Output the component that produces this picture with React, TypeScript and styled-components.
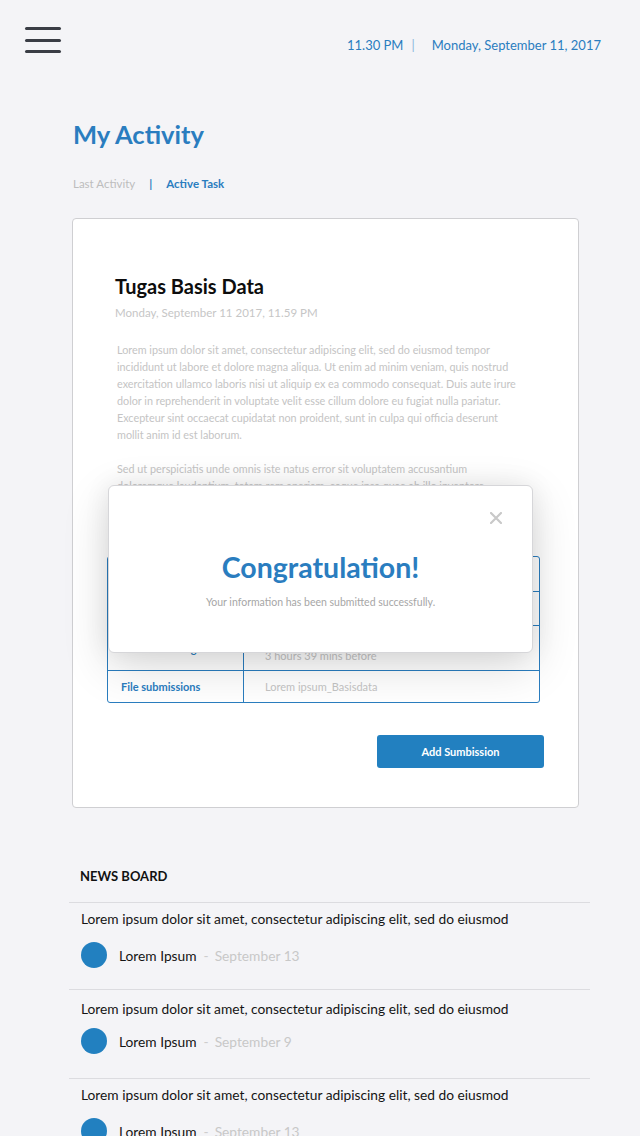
import React from 'react'
import styled, { createGlobalStyle } from 'styled-components'

const blue = '#2a7dbf'

const GlobalStyle = createGlobalStyle`
    html, body {
        margin: 0;
        padding: 0;
        background: #f4f4f7;
        font-family: Lato, "Open Sans", sans-serif;
    }
`

const Page = styled.div`
    width: 640px;
    min-height: 1136px;
    background: #f4f4f7;
    overflow: hidden;
`

const TopBar = styled.header`
    display: flex;
    justify-content: space-between;
    align-items: center;
    padding: 26px 39px 0 25px;
    height: 28px;
`

const Burger = styled.button`
    display: flex;
    flex-direction: column;
    justify-content: space-between;
    width: 36px;
    height: 26px;
    padding: 0;
    border: none;
    background: none;

    span {
        display: block;
        height: 3px;
        border-radius: 2px;
        background: #3a3d45;
    }
`

const Clock = styled.div`
    display: flex;
    color: ${blue};
    font-size: 13px;
    margin-top: 10px;

    i {
        font-style: normal;
        color: #8ab6db;
        margin: 0 17px 0 8px;
    }
`

const Main = styled.main`
    padding: 0 59px 0 72px;
`

const Heading = styled.h1`
    margin: 64px 0 0 1px;
    font-size: 25.5px;
    line-height: 32px;
    font-weight: 700;
    color: ${blue};
`

const Tabs = styled.nav`
    display: flex;
    gap: 14px;
    margin: 27px 0 0 1px;
    font-size: 11.5px;
    line-height: 14px;
`

const Tab = styled.span<{ active?: boolean }>`
    color: ${p => p.active ? blue : '#bdbdbd'};
    font-weight: ${p => p.active ? 700 : 400};
`

const Sep = styled.span`
    color: ${blue};
    font-weight: 700;
`

const Card = styled.section`
    position: relative;
    margin-top: 27px;
    width: 507px;
    height: 590px;
    background: #fff;
    border: 1px solid #cfcfd2;
    border-radius: 4px;
    padding: 55px 37px 0 34px;
    box-sizing: border-box;
`

const TaskInfo = styled.div`
    padding-left: 8px;
`

const TaskTitle = styled.h2`
    margin: 0;
    font-size: 20px;
    line-height: 24px;
    font-weight: 700;
    color: #0d0d0d;
`

const TaskDate = styled.div`
    margin-top: 7px;
    font-size: 11.5px;
    line-height: 16px;
    color: #c6c6c6;
`

const Body = styled.p`
    margin: 20px 0 0 2px;
    width: 403px;
    font-size: 10.8px;
    line-height: 17px;
    color: #c4c4c4;

    & + & {
        margin-top: 17px;
    }
`

const Table = styled.div`
    display: grid;
    grid-template-columns: 135px 1fr;
    margin-top: 45px;
    border: 1px solid ${blue};
    border-radius: 3px;
    width: 433px;
    box-sizing: border-box;
`

const Cell = styled.div<{ h: number; label?: boolean; last?: boolean }>`
    height: ${p => p.h}px;
    box-sizing: border-box;
    display: flex;
    flex-direction: column;
    justify-content: center;
    padding: 0 ${p => p.label ? 13 : 21}px;
    font-size: 11px;
    line-height: 15px;
    color: ${p => p.label ? blue : '#c4c4c4'};
    font-weight: ${p => p.label ? 700 : 400};
    border-left: ${p => p.label ? 'none' : `1px solid ${blue}`};
    border-bottom: ${p => p.last ? 'none' : `1px solid ${blue}`};
`

const Actions = styled.div`
    display: flex;
    justify-content: flex-end;
    margin: 32px -3px 0 0;
`

const Button = styled.button`
    width: 167px;
    height: 33px;
    border: none;
    border-radius: 3px;
    background: #2280c0;
    color: #fff;
    font-family: inherit;
    font-size: 11px;
    font-weight: 700;
`

const Modal = styled.div`
    position: absolute;
    left: 35px;
    top: 266px;
    width: 425px;
    height: 168px;
    box-sizing: border-box;
    background: #fff;
    border: 1px solid #d6d6d9;
    border-radius: 6px;
    box-shadow: 0 14px 48px rgba(0, 0, 0, 0.14), 0 0 26px rgba(0, 0, 0, 0.08);
    display: flex;
    flex-direction: column;
    align-items: center;
    padding-top: 64px;
`

const Close = styled.button`
    position: absolute;
    top: 26px;
    right: 30px;
    padding: 0;
    border: none;
    background: none;
    line-height: 0;
`

const ModalTitle = styled.div`
    font-size: 28.5px;
    line-height: 34px;
    font-weight: 700;
    color: ${blue};
`

const ModalText = styled.div`
    margin-top: 12px;
    font-size: 10.5px;
    color: #a6a6a6;
`

const News = styled.section`
    margin: 59px 50px 0 69px;
`

const NewsHeading = styled.h3`
    margin: 0;
    padding: 0 0 17px 11px;
    font-size: 13px;
    line-height: 18px;
    font-weight: 700;
    color: #111;
    border-bottom: 1px solid #dcdce0;
`

const NewsItem = styled.article<{ tight?: boolean }>`
    padding: ${p => p.tight ? 10 : 7}px 12px 0;
    height: ${p => p.tight ? 89 : 87}px;
    box-sizing: border-box;
    border-bottom: 1px solid #dcdce0;
`

const NewsText = styled.div`
    font-size: 13.75px;
    line-height: 18px;
    color: #151515;
`

const Meta = styled.div<{ tight?: boolean }>`
    display: flex;
    align-items: center;
    margin-top: ${p => p.tight ? 10 : 14}px;
    font-size: 13.75px;
    color: #151515;

    em {
        font-style: normal;
        color: #cdcdcd;
        margin: 0 6px 0 7px;
    }

    time {
        color: #c8c8c8;
    }
`

const Avatar = styled.span`
    width: 26px;
    height: 26px;
    border-radius: 50%;
    background: #2280c0;
    margin-right: 12px;
`

const news = [
    { who: 'Lorem Ipsum', date: 'September 13' },
    { who: 'Lorem Ipsum', date: 'September 9', tight: true },
    { who: 'Lorem Ipsum', date: 'September 13' },
]

const App: React.FC = () =>
    <Page>
        <GlobalStyle />
        <TopBar>
            <Burger aria-label="menu">
                <span />
                <span />
                <span />
            </Burger>
            <Clock>
                <span>11.30 PM</span>
                <i>|</i>
                <span>Monday, September 11, 2017</span>
            </Clock>
        </TopBar>
        <Main>
            <Heading>My Activity</Heading>
            <Tabs>
                <Tab>Last Activity</Tab>
                <Sep>|</Sep>
                <Tab active>Active Task</Tab>
            </Tabs>
            <Card>
                <TaskInfo>
                    <TaskTitle>Tugas Basis Data</TaskTitle>
                    <TaskDate>Monday, September 11 2017, 11.59 PM</TaskDate>
                    <Body>
                        Lorem ipsum dolor sit amet, consectetur adipiscing elit, sed do eiusmod tempor
                        incididunt ut labore et dolore magna aliqua. Ut enim ad minim veniam, quis nostrud
                        exercitation ullamco laboris nisi ut aliquip ex ea commodo consequat. Duis aute irure
                        dolor in reprehenderit in voluptate velit esse cillum dolore eu fugiat nulla pariatur.
                        Excepteur sint occaecat cupidatat non proident, sunt in culpa qui officia deserunt
                        mollit anim id est laborum.
                    </Body>
                    <Body>
                        Sed ut perspiciatis unde omnis iste natus error sit voluptatem accusantium
                        doloremque laudantium, totam rem aperiam, eaque ipsa quae ab illo inventore
                        veritatis et quasi architecto beatae vitae dicta sunt explicabo.
                    </Body>
                </TaskInfo>
                <Table>
                    <Cell h={35} label>Submission status</Cell>
                    <Cell h={35}>No attempt</Cell>
                    <Cell h={34} label>Grading status</Cell>
                    <Cell h={34}>Not graded</Cell>
                    <Cell h={45} label>Time remaining</Cell>
                    <Cell h={45}>
                        <span>Monday, September 11 2017</span>
                        <span>3 hours 39 mins before</span>
                    </Cell>
                    <Cell h={31} label last>File submissions</Cell>
                    <Cell h={31} last>Lorem ipsum_Basisdata</Cell>
                </Table>
                <Actions>
                    <Button>Add Sumbission</Button>
                </Actions>
                <Modal>
                    <Close aria-label="close">
                        <svg width="12" height="12" viewBox="0 0 12 12">
                            <path d="M1 1 L11 11 M11 1 L1 11" stroke="#c9c9c9" strokeWidth="2.2" strokeLinecap="round" />
                        </svg>
                    </Close>
                    <ModalTitle>Congratulation!</ModalTitle>
                    <ModalText>Your information has been submitted successfully.</ModalText>
                </Modal>
            </Card>
        </Main>
        <News>
            <NewsHeading>NEWS BOARD</NewsHeading>
            {news.map((n, i) =>
                <NewsItem key={i} tight={n.tight}>
                    <NewsText>Lorem ipsum dolor sit amet, consectetur adipiscing elit, sed do eiusmod</NewsText>
                    <Meta tight={n.tight}>
                        <Avatar />
                        {n.who}
                        <em>-</em>
                        <time>{n.date}</time>
                    </Meta>
                </NewsItem>
            )}
        </News>
    </Page>

export default App
